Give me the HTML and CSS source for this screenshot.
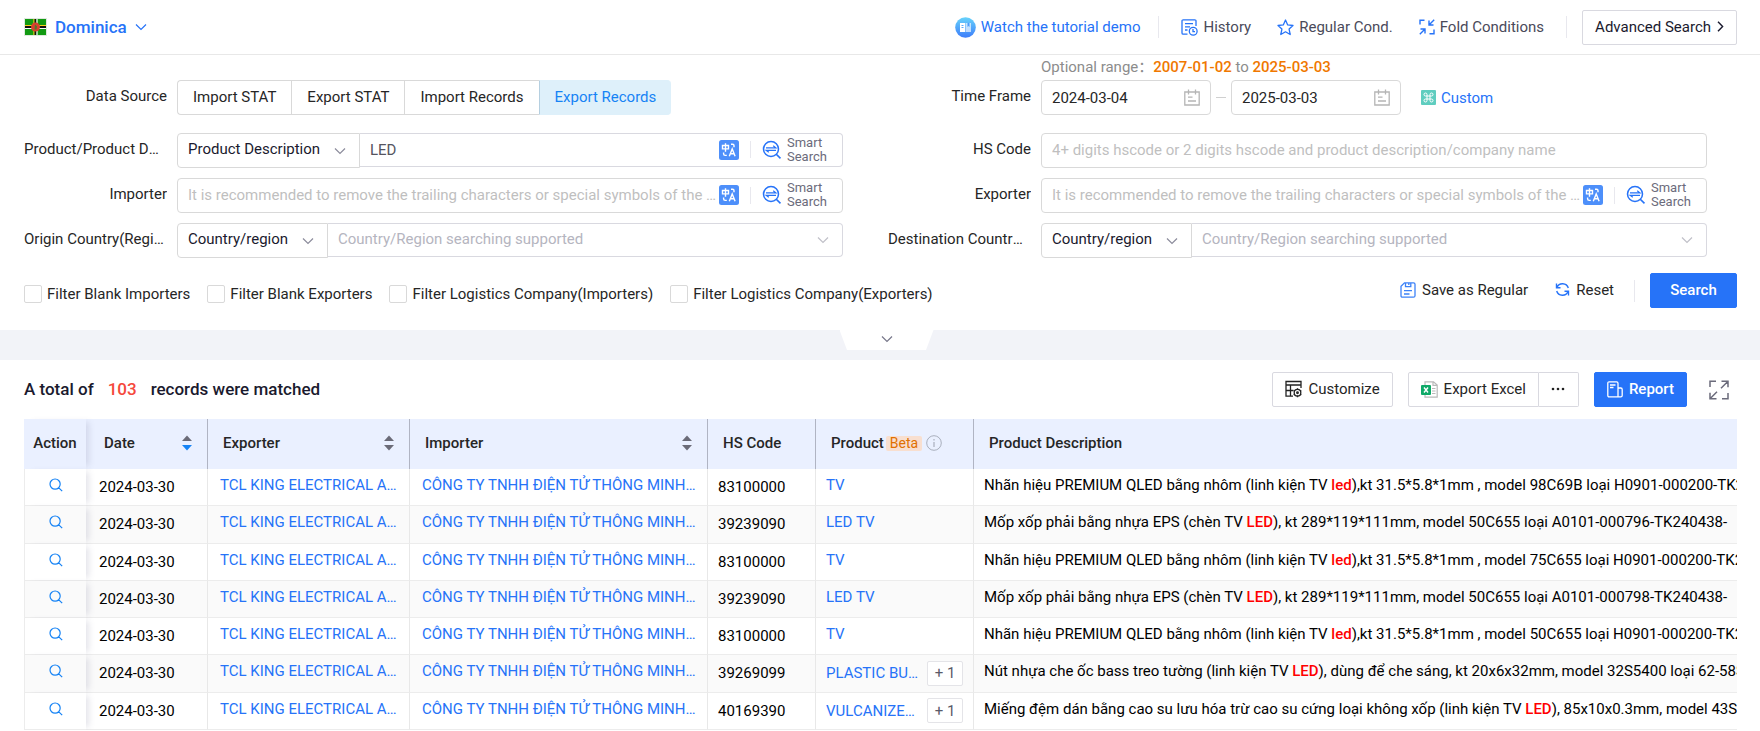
FILE: index.html
```html
<!DOCTYPE html>
<html lang="en">

<head>
    <meta charset="UTF-8">
    <meta name="viewport" content="width=device-width, initial-scale=1.0">
    <title>Dominica - Export Records</title>
    <link rel="stylesheet" href="styles.css">
</head>

<body>
    <!-- Shared icons -->
    <svg class="sprite" aria-hidden="true">
        <symbol id="chevron" viewBox="0 0 12 12">
            <path d="M1 3.5l5 5 5-5" fill="none" stroke="currentColor" stroke-width="1.2" />
        </symbol>
        <symbol id="calendar" viewBox="0 0 16 17">
            <path d="M.8 3h14.4v13H.8zM4.5.5v5M11.5.5v5M4 8.2h4.5M4 12h8" fill="none" stroke="currentColor" stroke-width="1.3" />
        </symbol>
        <symbol id="translate" viewBox="0 0 20 20">
            <rect width="20" height="20" rx="2.5" fill="#4d8ffa" />
            <path d="M3.5 5.5h6v3.4h-6zM6.5 3.3v8.4M12 4.2h1.6q1.4 0 1.4 1.4v1.6M4.6 12.6v1.2q0 1.6 1.6 1.6h1.6M10.3 16.3l2.9-7.3 2.9 7.3M11.4 13.8h3.6" fill="none" stroke="#fff" stroke-width="1.4" />
        </symbol>
        <symbol id="smart" viewBox="0 0 20 20">
            <path d="M14.4 14.4l4.1 4M9 1.5a7.5 7.5 0 1 0 0 15 7.5 7.5 0 0 0 0-15z" fill="none" stroke="#2673f8" stroke-width="1.5" />
            <path d="M4 7.8h9.8l-2.6-2M14 10.3H4.2l2.6 2" fill="none" stroke="#2673f8" stroke-width="1.2" />
        </symbol>
        <symbol id="lens" viewBox="0 0 14 14">
            <path d="M6.1 1a5.1 5.1 0 1 0 0 10.2A5.1 5.1 0 0 0 6.1 1zM9.8 9.8l3.4 3.4" fill="none" stroke="#1683f5" stroke-width="1.2" />
        </symbol>
        <symbol id="sort" viewBox="0 0 10 16">
            <path class="up" d="M5 .5l5 5.5H0z" />
            <path class="down" d="M5 15.500l5-5.500H0z" />
        </symbol>
    </svg>

    <header class="topbar">
        <button type="button" class="country">
            <svg class="flag" viewBox="0 0 23 18">
                <rect width="23" height="18" fill="#dfe9df" />
                <rect x="1" y="1" width="21" height="16" fill="#129a12" />
                <path d="M10 1v16M1 7.500h21" stroke="#fcd116" stroke-width="1.200" />
                <path d="M11.500 1v16M1 9h21" stroke="#111" stroke-width="1.800" />
                <path d="M13 1v16M1 10.500h21" stroke="#fff" stroke-width="1.200" />
                <circle cx="11.500" cy="9" r="4.500" fill="#d8412f" />
                <path d="M11 6.500l2 2-.5 3h-2z" fill="#4c7a2b" />
            </svg>
            Dominica
            <svg class="chev" viewBox="0 0 12 12"><use href="#chevron" /></svg>
        </button>

        <nav class="top-actions">
            <a href="#" class="tutorial">
                <svg width="21" height="21" viewBox="0 0 21 21">
                    <defs>
                        <linearGradient id="ball" x1="0" y1="0" x2="0" y2="1">
                            <stop offset="0" stop-color="#67d3fb" />
                            <stop offset="1" stop-color="#3d7dfa" />
                        </linearGradient>
                    </defs>
                    <circle cx="10.500" cy="10.500" r="10.300" fill="url(#ball)" />
                    <path d="M5 6h5v9H5z" fill="#fff" />
                    <path d="M10.500 6H16v9h-5.500z" fill="#fff" opacity=".65" />
                    <path d="M6.500 8.500h2M6.500 10.500h2" stroke="#5aa9fb" />
                    <path d="M12.500 6h2v4l-1-1-1 1z" fill="#4a9cfb" />
                </svg>
                Watch the tutorial demo
            </a>
            <span class="divider"></span>
            <button type="button" class="plain history">
                <svg width="17" height="17" viewBox="0 0 17 17" fill="none" stroke="#2673f8" stroke-width="1.3">
                    <path d="M15 7V2q0-1.200-1.200-1.200H2.200Q1 .8 1 2v12q0 1.200 1.200 1.200h4.300M4 4.700h8M4 7.800h5M4 11h2.500" />
                    <circle cx="12.200" cy="12.200" r="3.900" />
                    <path d="M12 10v2.600h2" />
                </svg>
                History
            </button>
            <button type="button" class="plain regular">
                <svg width="17" height="17" viewBox="0 0 17 17" fill="none" stroke="#2673f8" stroke-width="1.3" stroke-linejoin="round">
                    <path d="M8.500 1l2.200 4.900 5.300.6-3.900 3.600 1.100 5.400-4.700-2.700-4.700 2.700 1.100-5.400L1 6.500l5.300-.6z" />
                </svg>
                Regular Cond.
            </button>
            <button type="button" class="plain fold">
                <svg width="16" height="16" viewBox="0 0 16 16" fill="none" stroke="#2673f8" stroke-width="1.4">
                    <path d="M1 5.500V1.200h4.500M15 10.500v4.300h-4.500M15.200.8L10 6M10 1.500V6h4.500M.8 15.200L6 10M1.500 10H6v4.500" />
                </svg>
                Fold Conditions
            </button>
            <span class="divider"></span>
            <button type="button" class="btn advanced">
                Advanced Search
                <svg width="7" height="11" viewBox="0 0 7 11"><path d="M1 .8l4.600 4.700L1 10.200" fill="none" stroke="currentColor" stroke-width="1.400" /></svg>
            </button>
        </nav>
    </header>

    <form class="conditions" id="searchForm">
        <div class="fields">
            <div class="field">
                <span class="label" id="sourceLabel">Data Source</span>
                <div class="tabs" role="group" aria-labelledby="sourceLabel">
                    <button type="button">Import STAT</button>
                    <button type="button">Export STAT</button>
                    <button type="button">Import Records</button>
                    <button type="button" class="active">Export Records</button>
                </div>
            </div>

            <div class="field">
                <label class="label" for="dateFrom">Time Frame</label>
                <div class="time-frame">
                    <p class="range">Optional range：<b>2007-01-02</b> to <b>2025-03-03</b></p>
                    <div class="dates">
                        <div class="box date">
                            <input type="text" id="dateFrom" value="2024-03-04">
                            <svg width="16" height="17"><use href="#calendar" /></svg>
                        </div>
                        <span class="dash"></span>
                        <div class="box date">
                            <input type="text" id="dateTo" value="2025-03-03" aria-label="End date">
                            <svg width="16" height="17"><use href="#calendar" /></svg>
                        </div>
                        <a href="#" class="custom">
                            <svg width="15" height="15" viewBox="0 0 15 15">
                                <rect width="15" height="15" rx="1" fill="#5fcdbf" />
                                <path d="M6 6V4.500A1.500 1.500 0 1 0 4.500 6h6A1.500 1.500 0 1 0 9 4.500v6A1.500 1.500 0 1 0 10.500 9h-6A1.500 1.500 0 1 0 6 10.500z" fill="none" stroke="#fff" />
                            </svg>
                            Custom
                        </a>
                    </div>
                </div>
            </div>

            <div class="field">
                <label class="label long" for="product">Product/Product Description</label>
                <div class="combo">
                    <div class="pick">
                        <select class="wide" aria-label="Product field">
                            <option>Product Description</option>
                        </select>
                        <svg class="chev" viewBox="0 0 12 12"><use href="#chevron" /></svg>
                    </div>
                    <div class="box joined">
                        <input type="text" id="product" class="entered" value="LED">
                        <button type="button" class="icon-btn" aria-label="Translate"><svg width="20" height="20"><use href="#translate" /></svg></button>
                        <span class="divider small"></span>
                        <button type="button" class="smart"><svg width="20" height="20"><use href="#smart" /></svg><span>Smart Search</span></button>
                    </div>
                </div>
            </div>

            <div class="field">
                <label class="label" for="hsCode">HS Code</label>
                <div class="box">
                    <input type="text" id="hsCode" placeholder="4+ digits hscode or 2 digits hscode and product description/company name">
                </div>
            </div>

            <div class="field">
                <label class="label" for="importer">Importer</label>
                <div class="box">
                    <input type="text" id="importer" placeholder="It is recommended to remove the trailing characters or special symbols of the company name">
                    <button type="button" class="icon-btn" aria-label="Translate"><svg width="20" height="20"><use href="#translate" /></svg></button>
                    <span class="divider small"></span>
                    <button type="button" class="smart"><svg width="20" height="20"><use href="#smart" /></svg><span>Smart Search</span></button>
                </div>
            </div>

            <div class="field">
                <label class="label" for="exporter">Exporter</label>
                <div class="box">
                    <input type="text" id="exporter" placeholder="It is recommended to remove the trailing characters or special symbols of the company name">
                    <button type="button" class="icon-btn" aria-label="Translate"><svg width="20" height="20"><use href="#translate" /></svg></button>
                    <span class="divider small"></span>
                    <button type="button" class="smart"><svg width="20" height="20"><use href="#smart" /></svg><span>Smart Search</span></button>
                </div>
            </div>

            <div class="field">
                <label class="label long" for="origin">Origin Country(Region)</label>
                <div class="combo">
                    <div class="pick">
                        <select aria-label="Origin type">
                            <option>Country/region</option>
                        </select>
                        <svg class="chev" viewBox="0 0 12 12"><use href="#chevron" /></svg>
                    </div>
                    <div class="pick grow">
                        <select id="origin" class="joined empty">
                            <option>Country/Region searching supported</option>
                        </select>
                        <svg class="chev" viewBox="0 0 12 12"><use href="#chevron" /></svg>
                    </div>
                </div>
            </div>

            <div class="field">
                <label class="label long" for="destination">Destination Country(Region)</label>
                <div class="combo">
                    <div class="pick">
                        <select aria-label="Destination type">
                            <option>Country/region</option>
                        </select>
                        <svg class="chev" viewBox="0 0 12 12"><use href="#chevron" /></svg>
                    </div>
                    <div class="pick grow">
                        <select id="destination" class="joined empty">
                            <option>Country/Region searching supported</option>
                        </select>
                        <svg class="chev" viewBox="0 0 12 12"><use href="#chevron" /></svg>
                    </div>
                </div>
            </div>
        </div>

        <div class="form-footer">
            <div class="checks">
                <label><input type="checkbox">Filter Blank Importers</label>
                <label><input type="checkbox">Filter Blank Exporters</label>
                <label><input type="checkbox">Filter Logistics Company(Importers)</label>
                <label><input type="checkbox">Filter Logistics Company(Exporters)</label>
            </div>
            <div class="form-actions">
                <button type="button" class="plain">
                    <svg width="16" height="16" viewBox="0 0 16 16" fill="none" stroke="#3d82f7" stroke-width="1.3">
                        <path d="M4.500.8h9q1.500 0 1.500 1.500v11.400q0 1.500-1.500 1.500h-11Q1 15.200 1 13.700V4.300zM5.500 1v3.700h5.300V1M8.800 1v2M4 8.700h8M4 12h5.500" />
                    </svg>
                    Save as Regular
                </button>
                <button type="button" class="plain reset">
                    <svg width="15" height="15" viewBox="0 0 15 15" fill="none" stroke="#2673f8" stroke-width="1.4">
                        <path d="M2 5.500A6 6 0 0 1 13.300 6M13 9.500A6 6 0 0 1 1.700 9M1.500 1.500v4.200h4M13.500 13.500V9.300h-4" />
                    </svg>
                    Reset
                </button>
                <span class="divider"></span>
                <button type="submit" class="btn primary search">Search</button>
            </div>
        </div>
    </form>

    <div class="band">
        <button type="button" class="notch" aria-label="Expand">
            <svg class="chev" viewBox="0 0 12 12"><use href="#chevron" /></svg>
        </button>
    </div>

    <main class="results">
        <div class="results-head">
            <h2>A total of <span>103</span> records were matched</h2>
            <div class="tools">
                <button type="button" class="btn">
                    <svg width="17" height="18" viewBox="0 0 17 18" fill="none" stroke="#222" stroke-width="1.300">
                        <path d="M16 8V1.500H1v14.700h7M1 5h15M5.500 5v11M1 10.500h7.500" />
                        <circle cx="12.500" cy="12.700" r="3.300" />
                        <circle cx="12.500" cy="12.700" r=".8" />
                        <path d="M12.500 8.300v1.300M12.500 15.800v1.400M8.700 10.500l1.200.7M15.100 14.200l1.200.7M8.700 14.900l1.200-.7M15.100 11.200l1.200-.7" />
                    </svg>
                    Customize
                </button>
                <div class="split">
                    <button type="button" class="btn">
                        <svg width="17" height="17" viewBox="0 0 17 17">
                            <path d="M4 4V.8h8.500L16.200 4v12.200H4V13M12 1v3.300h4" fill="none" stroke="#b9b9b9" stroke-width="1.200" />
                            <path d="M11 7.500h3.500M11 10h3.500M11 12.500h3.500" stroke="#b9b9b9" />
                            <rect y="4" width="10" height="10" rx="1" fill="#0fa968" />
                            <path d="M3 6.500l4 5M7 6.500l-4 5" stroke="#fff" stroke-width="1.400" />
                        </svg>
                        Export Excel
                    </button>
                    <button type="button" class="btn more" aria-label="More">
                        <svg width="14" height="4" viewBox="0 0 14 4" fill="#222"><circle cx="2" cy="2" r="1.300" /><circle cx="7" cy="2" r="1.300" /><circle cx="12" cy="2" r="1.300" /></svg>
                    </button>
                </div>
                <button type="button" class="btn primary">
                    <svg width="16" height="17" viewBox="0 0 16 17" fill="none" stroke="#fff" stroke-width="1.300">
                        <path d="M11 15.800H2.200Q.8 15.800.8 14.400V2.200Q.8.8 2.200.8h7.400Q11 .8 11 2.200zM11 7h2.800q1.400 0 1.400 1.400v6q0 1.400-1.400 1.400H11M3 4h5.500M3 6.500h3.500" />
                    </svg>
                    Report
                </button>
                <button type="button" class="icon-btn expand" aria-label="Full screen">
                    <svg width="20" height="20" viewBox="0 0 20 20" fill="none" stroke="#6b6b7b" stroke-width="1.500">
                        <path d="M1 7V1.200h6M13 18.800h6V13M12.500 1.200H19v6M19 1.200l-7 7M7.500 18.800H1v-6M1 18.800l7-7" />
                    </svg>
                </button>
            </div>
        </div>

        <table>
            <colgroup>
                <col class="c-action">
                <col class="c-date">
                <col class="c-exporter">
                <col class="c-importer">
                <col class="c-hs">
                <col class="c-product">
                <col>
            </colgroup>
            <thead>
                <tr>
                    <th class="pin">Action</th>
                    <th class="date-col"><div class="th">Date <svg class="sort desc" width="10" height="16"><use href="#sort" /></svg></div></th>
                    <th><div class="th">Exporter <svg class="sort" width="10" height="16"><use href="#sort" /></svg></div></th>
                    <th><div class="th">Importer <svg class="sort" width="10" height="16"><use href="#sort" /></svg></div></th>
                    <th>HS Code</th>
                    <th>
                        <div class="th beta">Product <em>Beta</em>
                            <svg width="16" height="16" viewBox="0 0 16 16" fill="none" stroke="#a9afbd"><circle cx="8" cy="8" r="7.300" /><path d="M8 7v5M8 4v1.500" stroke-width="1.200" /></svg>
                        </div>
                    </th>
                    <th>Product Description</th>
                </tr>
            </thead>
            <tbody>
                <tr>
                    <td class="pin"><button type="button" class="icon-btn" aria-label="View"><svg width="14" height="14"><use href="#lens" /></svg></button></td>
                    <td class="num">2024-03-30</td>
                    <td class="company"><a href="#">TCL KING ELECTRICAL APPLIANCES (HUIZHOU) CO., LTD</a></td>
                    <td class="company"><a href="#">CÔNG TY TNHH ĐIỆN TỬ THÔNG MINH TCL (VIỆT NAM)</a></td>
                    <td class="num">83100000</td>
                    <td><a href="#">TV</a></td>
                    <td>Nhãn hiệu PREMIUM QLED bằng nhôm (linh kiện TV <mark>led</mark>),kt 31.5*5.8*1mm , model 98C69B loại H0901-000200-TK240438</td>
                </tr>
                <tr>
                    <td class="pin"><button type="button" class="icon-btn" aria-label="View"><svg width="14" height="14"><use href="#lens" /></svg></button></td>
                    <td class="num">2024-03-30</td>
                    <td class="company"><a href="#">TCL KING ELECTRICAL APPLIANCES (HUIZHOU) CO., LTD</a></td>
                    <td class="company"><a href="#">CÔNG TY TNHH ĐIỆN TỬ THÔNG MINH TCL (VIỆT NAM)</a></td>
                    <td class="num">39239090</td>
                    <td><a href="#">LED TV</a></td>
                    <td>Mốp xốp phải bằng nhựa EPS (chèn TV <mark>LED</mark>), kt 289*119*111mm, model 50C655 loại A0101-000796-TK240438-</td>
                </tr>
                <tr>
                    <td class="pin"><button type="button" class="icon-btn" aria-label="View"><svg width="14" height="14"><use href="#lens" /></svg></button></td>
                    <td class="num">2024-03-30</td>
                    <td class="company"><a href="#">TCL KING ELECTRICAL APPLIANCES (HUIZHOU) CO., LTD</a></td>
                    <td class="company"><a href="#">CÔNG TY TNHH ĐIỆN TỬ THÔNG MINH TCL (VIỆT NAM)</a></td>
                    <td class="num">83100000</td>
                    <td><a href="#">TV</a></td>
                    <td>Nhãn hiệu PREMIUM QLED bằng nhôm (linh kiện TV <mark>led</mark>),kt 31.5*5.8*1mm , model 75C655 loại H0901-000200-TK240438</td>
                </tr>
                <tr>
                    <td class="pin"><button type="button" class="icon-btn" aria-label="View"><svg width="14" height="14"><use href="#lens" /></svg></button></td>
                    <td class="num">2024-03-30</td>
                    <td class="company"><a href="#">TCL KING ELECTRICAL APPLIANCES (HUIZHOU) CO., LTD</a></td>
                    <td class="company"><a href="#">CÔNG TY TNHH ĐIỆN TỬ THÔNG MINH TCL (VIỆT NAM)</a></td>
                    <td class="num">39239090</td>
                    <td><a href="#">LED TV</a></td>
                    <td>Mốp xốp phải bằng nhựa EPS (chèn TV <mark>LED</mark>), kt 289*119*111mm, model 50C655 loại A0101-000798-TK240438-</td>
                </tr>
                <tr>
                    <td class="pin"><button type="button" class="icon-btn" aria-label="View"><svg width="14" height="14"><use href="#lens" /></svg></button></td>
                    <td class="num">2024-03-30</td>
                    <td class="company"><a href="#">TCL KING ELECTRICAL APPLIANCES (HUIZHOU) CO., LTD</a></td>
                    <td class="company"><a href="#">CÔNG TY TNHH ĐIỆN TỬ THÔNG MINH TCL (VIỆT NAM)</a></td>
                    <td class="num">83100000</td>
                    <td><a href="#">TV</a></td>
                    <td>Nhãn hiệu PREMIUM QLED bằng nhôm (linh kiện TV <mark>led</mark>),kt 31.5*5.8*1mm , model 50C655 loại H0901-000200-TK240438</td>
                </tr>
                <tr>
                    <td class="pin"><button type="button" class="icon-btn" aria-label="View"><svg width="14" height="14"><use href="#lens" /></svg></button></td>
                    <td class="num">2024-03-30</td>
                    <td class="company"><a href="#">TCL KING ELECTRICAL APPLIANCES (HUIZHOU) CO., LTD</a></td>
                    <td class="company"><a href="#">CÔNG TY TNHH ĐIỆN TỬ THÔNG MINH TCL (VIỆT NAM)</a></td>
                    <td class="num">39269099</td>
                    <td class="num"><div class="products"><a href="#">PLASTIC BUTTON</a><button type="button">+ 1</button></div></td>
                    <td>Nút nhựa che ốc bass treo tường (linh kiện TV <mark>LED</mark>), dùng để che sáng, kt 20x6x32mm, model 32S5400 loại 62-58S540</td>
                </tr>
                <tr>
                    <td class="pin"><button type="button" class="icon-btn" aria-label="View"><svg width="14" height="14"><use href="#lens" /></svg></button></td>
                    <td class="num">2024-03-30</td>
                    <td class="company"><a href="#">TCL KING ELECTRICAL APPLIANCES (HUIZHOU) CO., LTD</a></td>
                    <td class="company"><a href="#">CÔNG TY TNHH ĐIỆN TỬ THÔNG MINH TCL (VIỆT NAM)</a></td>
                    <td class="num">40169390</td>
                    <td class="num"><div class="products"><a href="#">VULCANIZED RUBBER</a><button type="button">+ 1</button></div></td>
                    <td>Miếng đệm dán bằng cao su lưu hóa trừ cao su cứng loại không xốp (linh kiện TV <mark>LED</mark>), 85x10x0.3mm, model 43S5400</td>
                </tr>
            </tbody>
        </table>
    </main>
</body>

</html>
```
FILE: styles.css
```css
* {
    margin: 0;
    padding: 0;
    box-sizing: border-box;
}

body {
    font-family: Roboto, "Noto Sans CJK SC", sans-serif;
    font-size: 15px;
    line-height: 20px;
    color: #262626;
    background: #fff;
}

button,
input,
select {
    font: inherit;
    color: inherit;
    background: none;
    border: none;
    outline: none;
}

button {
    cursor: pointer;
    white-space: nowrap;
}

a {
    color: #2673f8;
    text-decoration: none;
}

svg {
    flex-shrink: 0;
}

.sprite {
    display: none;
}

.chev {
    width: 12px;
    height: 12px;
}

.divider {
    width: 1px;
    height: 22px;
    background: #e8e8ee;
}

.divider.small {
    height: 17px;
    margin: 0 11px;
}

.btn {
    display: flex;
    align-items: center;
    justify-content: center;
    gap: 6px;
    height: 35px;
    padding: 0 12px 1px;
    border: 1px solid #d9d9e0;
    border-radius: 2px;
    background: #fff;
}

.btn.primary {
    background: #2673f8;
    border-color: #2673f8;
    color: #fff;
    font-weight: 500;
}

.plain {
    display: flex;
    align-items: center;
    gap: 5px;
}

.icon-btn {
    display: flex;
}

/* Top bar */
.topbar {
    display: flex;
    align-items: center;
    justify-content: space-between;
    height: 55px;
    padding: 0 23px 0 24px;
    border-bottom: 1px solid #e8e8e8;
}

.country {
    display: flex;
    align-items: center;
    gap: 8px;
    color: #2673f8;
    font-size: 17px;
    font-weight: 500;
}

.flag {
    width: 23px;
    height: 18px;
}

.top-actions {
    display: flex;
    align-items: center;
    color: #4a4a5a;
}

.tutorial {
    display: flex;
    align-items: center;
    gap: 5px;
    margin-right: 18px;
}

.history {
    margin-left: 22px;
}

.regular,
.fold {
    margin-left: 26px;
}

.fold {
    margin-right: 22px;
}

.advanced {
    margin-left: 15px;
    color: #1a1a2e;
}

/* Search conditions */
.fields {
    display: grid;
    grid-template-columns: repeat(2, minmax(0, 1fr));
    column-gap: 45px;
    row-gap: 10px;
    padding: 0 53px 0 24px;
}

.field {
    display: flex;
    align-items: flex-end;
}

.field:nth-child(-n + 2) {
    margin-bottom: 8px;
}

.label {
    flex: 0 0 143px;
    margin-right: 10px;
    padding-bottom: 2px;
    line-height: 33px;
    text-align: right;
    white-space: nowrap;
    overflow: hidden;
    text-overflow: ellipsis;
}

.label.long {
    flex-basis: 140px;
    margin-right: 13px;
}

.tabs {
    display: flex;
}

.tabs button {
    height: 35px;
    padding: 0 15px 2px;
    border: 1px solid #d9d9d9;
    border-right: none;
}

.tabs button:first-child {
    border-radius: 4px 0 0 4px;
}

.tabs .active {
    color: #1683f5;
    background: #def0fa;
    border-color: #def0fa;
    border-left-color: #b5cfe0;
    border-radius: 0 4px 4px 0;
}

.time-frame {
    flex: 1;
}

.range {
    height: 25px;
    padding-top: 2px;
    color: #8c8c8c;
}

.range b {
    font-weight: 500;
    color: #f07800;
}

.dates {
    display: flex;
    align-items: center;
}

.box {
    display: flex;
    flex: 1;
    align-items: center;
    min-width: 0;
    height: 35px;
    padding: 0 10px 1px;
    border: 1px solid #d9d9d9;
    border-radius: 4px;
}

.box input {
    flex: 1;
    width: 0;
    height: 100%;
    text-overflow: ellipsis;
}

.box input::placeholder {
    color: #bfbfbf;
}

.box .entered {
    color: #55555f;
}

.box.date {
    flex: 0 0 170px;
    padding-bottom: 0;
}

.date svg {
    color: #b5b5b5;
}

.dash {
    width: 10px;
    height: 1px;
    margin: 0 5px;
    background: #d0d0d0;
}

.custom {
    display: flex;
    align-items: center;
    gap: 5px;
    margin-left: 20px;
}

.smart {
    display: flex;
    align-items: center;
    gap: 5px;
    width: 70px;
    color: #6b6b7b;
    font-size: 13px;
    line-height: 14px;
    text-align: left;
    white-space: normal;
}

.combo {
    display: flex;
    flex: 1;
    align-items: flex-start;
    min-width: 0;
}

.combo .joined {
    height: 34px;
    border: 1px solid #d9d9e0;
    border-left: none;
    border-radius: 0 4px 4px 0;
}

.pick {
    display: grid;
    align-items: center;
}

.pick select,
.pick .chev {
    grid-area: 1 / 1;
}

.pick .chev {
    justify-self: end;
    margin-right: 14px;
    color: #8c8c9c;
    pointer-events: none;
}

.pick select {
    appearance: none;
    width: 151px;
    height: 35px;
    padding: 0 10px 3px;
    color: #1a1a2e;
    border: 1px solid #d9d9d9;
    border-radius: 4px 0 0 4px;
}

.pick .wide {
    width: 183px;
}

.pick.grow {
    flex: 1;
}

.pick .empty {
    width: 100%;
    color: #b5b5c0;
}

.pick .empty + .chev {
    color: #c0c0c8;
}

.form-footer {
    display: flex;
    justify-content: space-between;
    padding: 15px 23px 22px 24px;
}

.checks {
    display: flex;
    gap: 17px;
    padding-top: 7px;
}

.checks label {
    display: flex;
    align-items: center;
    gap: 5px;
    white-space: nowrap;
}

.checks input {
    appearance: none;
    width: 18px;
    height: 18px;
    border: 1px solid #d9d9d9;
    border-radius: 2px;
}

.form-actions {
    display: flex;
    align-items: center;
}

.form-actions .plain {
    gap: 6px;
    padding-bottom: 2px;
}

.reset {
    margin: 0 20px 0 27px;
}

.search {
    width: 87px;
    margin-left: 15px;
}

.band {
    display: flex;
    justify-content: center;
    height: 30px;
    padding-left: 13px;
    background: #f2f3f8;
}

.notch {
    display: flex;
    align-items: center;
    justify-content: center;
    width: 94px;
    height: 20px;
    padding-bottom: 2px;
    background: #fff;
    color: #77778a;
    clip-path: polygon(0 0, 100% 0, 92% 100%, 8% 100%);
}

/* Results */
.results {
    padding: 12px 23px 0 24px;
}

.results-head {
    display: flex;
    align-items: center;
    justify-content: space-between;
    margin-bottom: 12px;
}

h2 {
    display: flex;
    gap: 14px;
    padding-bottom: 2px;
    font-size: 17px;
    font-weight: 500;
    color: #1a1a2e;
}

h2 span {
    color: #f5483b;
}

.tools {
    display: flex;
    align-items: center;
    gap: 15px;
}

.split {
    display: flex;
}

.split .btn {
    border-radius: 2px 0 0 2px;
}

.split .more {
    width: 40px;
    border-left: none;
    border-radius: 0 2px 2px 0;
}

.expand {
    margin: 0 8px 0 7px;
}

table {
    width: 100%;
    table-layout: fixed;
    border-collapse: separate;
    border-spacing: 0;
}

.c-action {
    width: 62px;
}

.c-date {
    width: 122px;
}

.c-exporter {
    width: 202px;
}

.c-importer {
    width: 298px;
}

.c-hs {
    width: 108px;
}

.c-product {
    width: 158px;
}

th {
    height: 50px;
    padding: 0 15px 2px;
    background: #eaf0ff;
    border-right: 1px solid #b0b4c3;
    font-weight: 500;
    text-align: left;
    white-space: nowrap;
}

th.date-col {
    padding-left: 18px;
}

th.pin {
    padding: 0 0 2px;
}

.th {
    display: flex;
    align-items: center;
    justify-content: space-between;
}

.th.beta {
    justify-content: flex-start;
    gap: 2px;
}

.beta em {
    padding: 0 4px;
    border-radius: 2px;
    background: #f8dfd0;
    color: #e07000;
    font-size: 14px;
    font-style: normal;
    font-weight: 400;
    line-height: 15px;
}

.beta svg {
    margin-left: 2px;
}

.sort {
    fill: #6b6b78;
}

.sort.desc {
    --down: #1683f5;
}

.down {
    fill: var(--down, #6b6b78);
}

td {
    height: 37px;
    padding: 0 10px 5px;
    border-right: 1px solid #e8e8e8;
    border-bottom: 1px solid #ececec;
    color: #000;
    white-space: nowrap;
    overflow: hidden;
}

tbody tr:nth-child(even) td {
    background: #fafafa;
}

tbody tr:nth-child(4n + 2) td {
    height: 38px;
}

td.num {
    padding-bottom: 1px;
}

td.num:nth-child(2) {
    padding-left: 13px;
}

td.company {
    padding-left: 12px;
    text-overflow: ellipsis;
    color: #2673f8;
}

th:last-child,
td:last-child {
    border-right: none;
}

.pin {
    position: relative;
    z-index: 1;
    border-right: none;
    box-shadow: 6px 0 6px -3px rgba(80, 80, 120, 0.15);
    text-align: center;
    overflow: visible;
}

td.pin {
    background: #fff;
    border-left: 1px solid #ececec;
}

.pin .icon-btn {
    margin: 0 auto;
}

mark {
    background: none;
    color: #f00;
    font-weight: 500;
}

.products {
    display: flex;
    align-items: center;
    justify-content: space-between;
}

.products a {
    width: 94px;
    overflow: hidden;
    text-overflow: ellipsis;
}

.products button {
    width: 36px;
    height: 25px;
    border: 1px solid #e4e4e8;
    border-radius: 2px;
    background: #fff;
    color: #5a5a68;
}
```
